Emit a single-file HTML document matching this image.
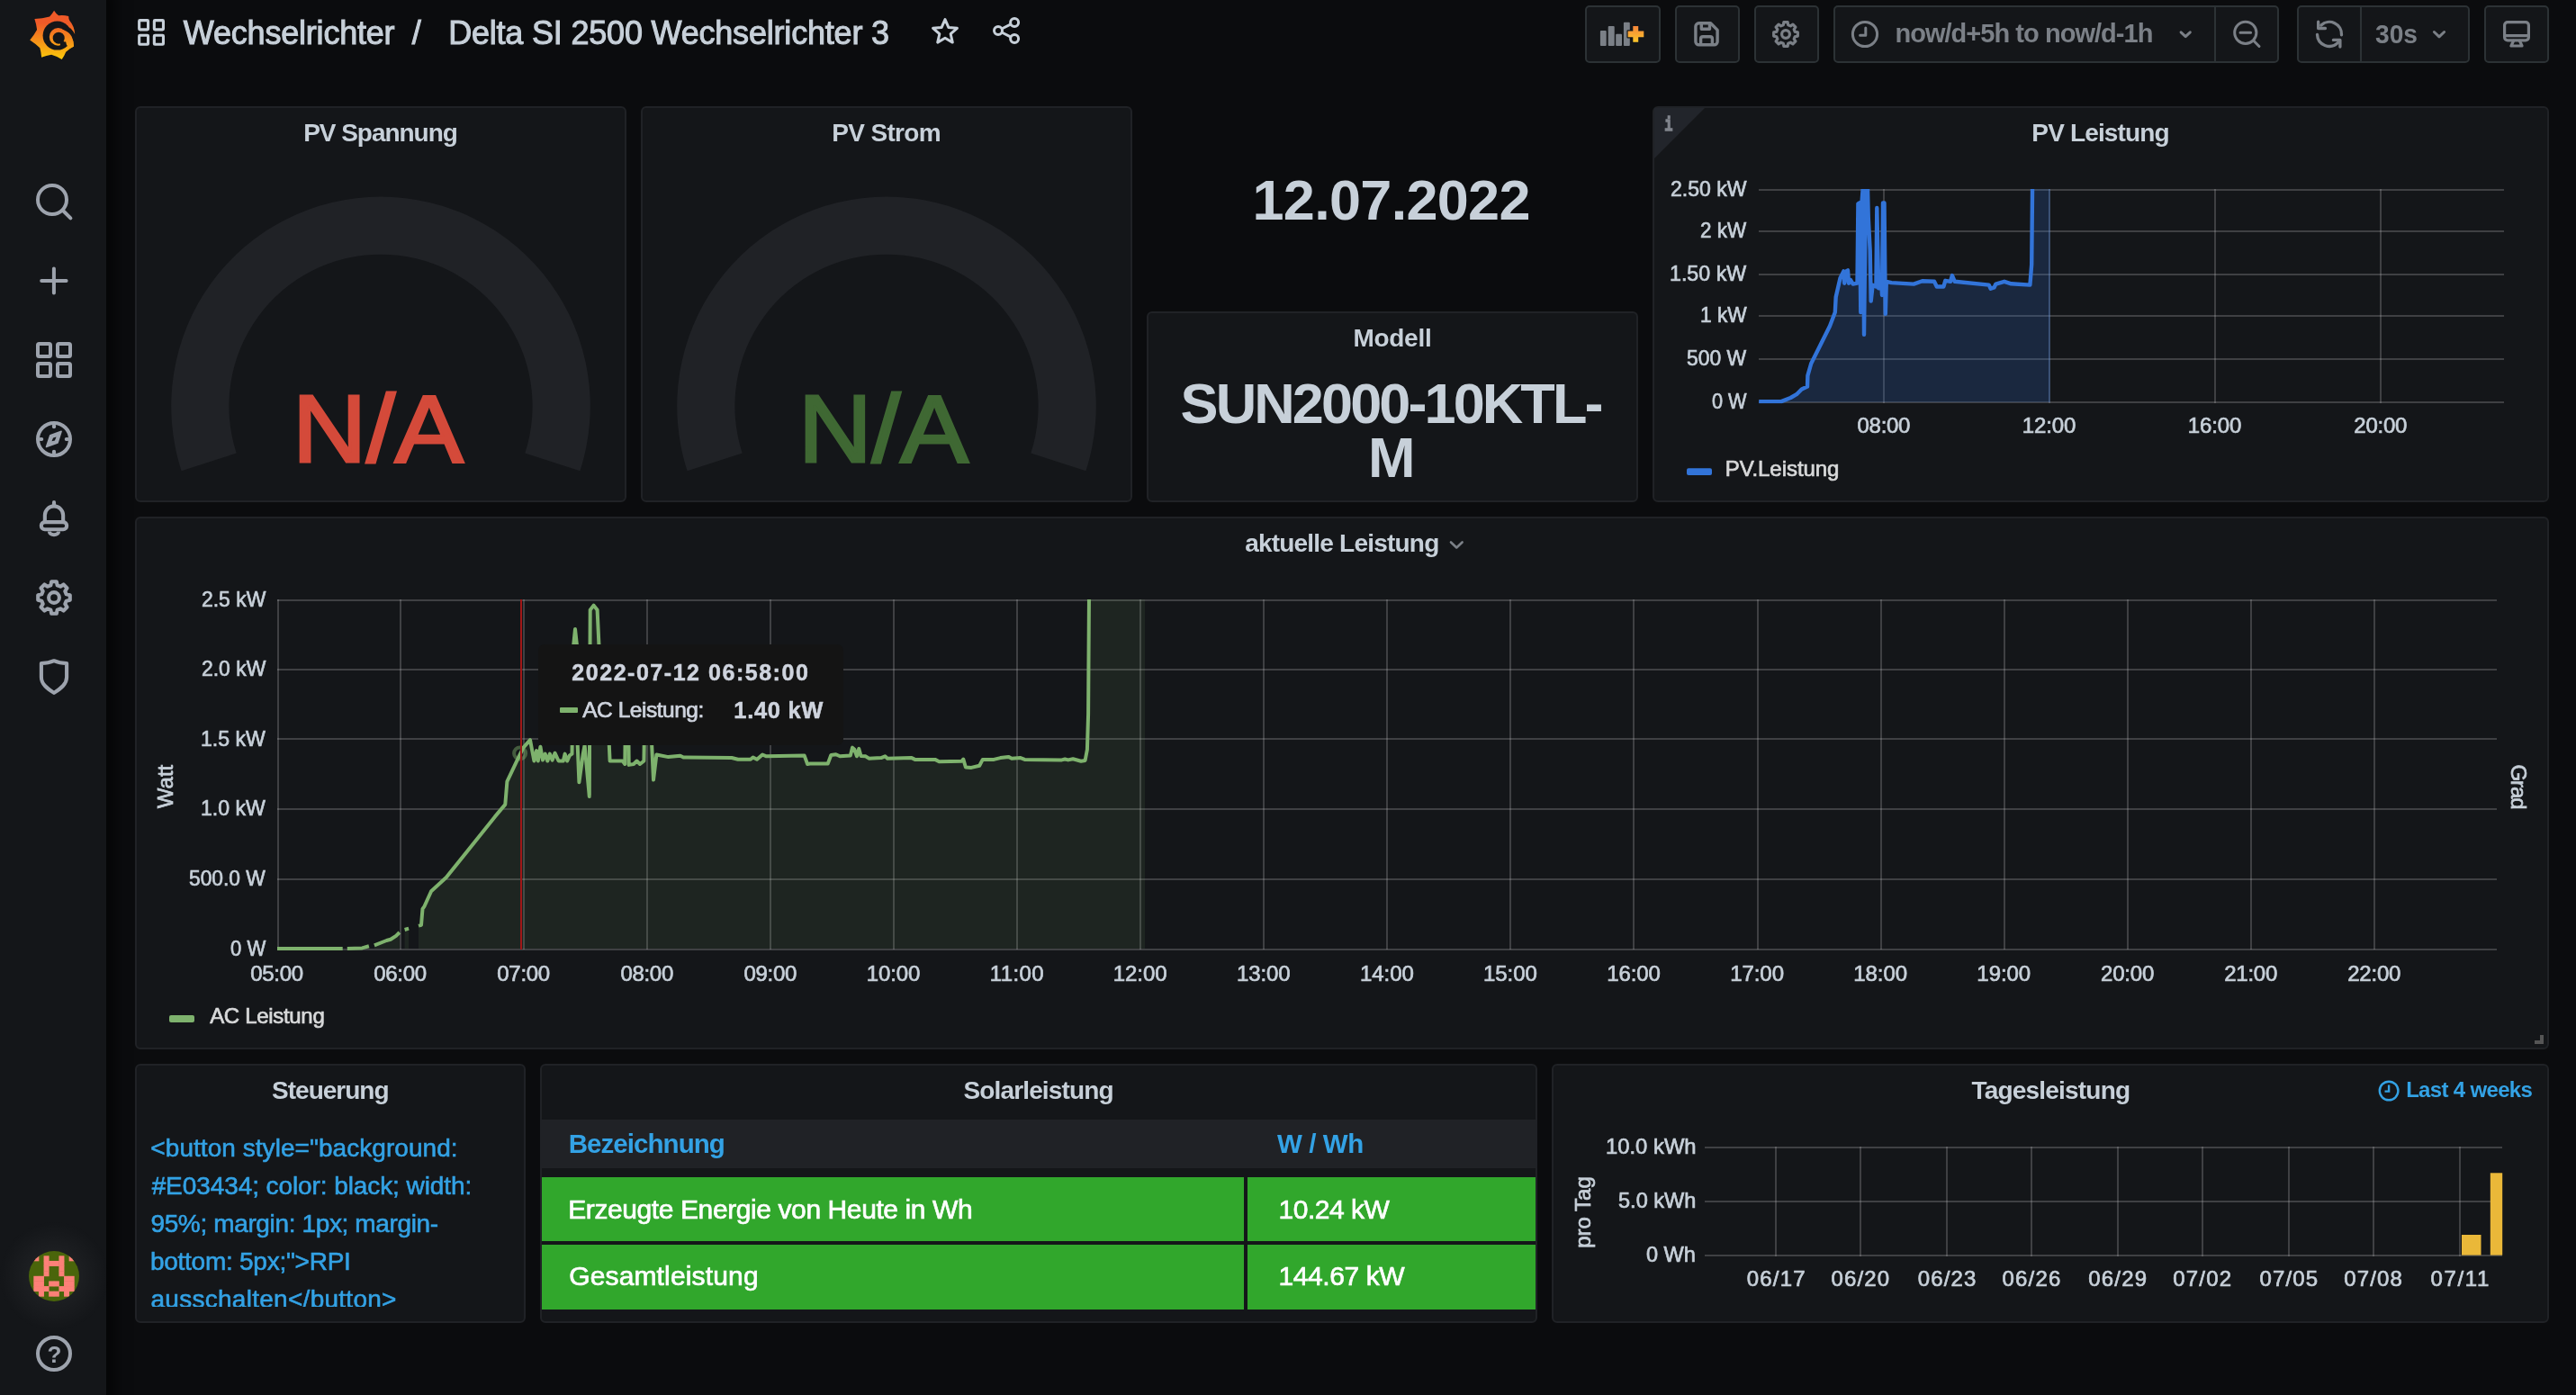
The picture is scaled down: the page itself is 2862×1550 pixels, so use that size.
<!DOCTYPE html>
<html lang="de"><head><meta charset="utf-8"><title>Delta SI 2500 Wechselrichter 3 - Grafana</title>
<style>
html,body{margin:0;padding:0;background:#0b0c0e}
body{width:2862px;height:1550px;position:relative;overflow:hidden;font-family:"Liberation Sans",sans-serif;color:#c7d0d9}
.t{position:absolute;white-space:nowrap;line-height:1}
.panel{position:absolute;box-sizing:border-box;background:#141619;border:2px solid #202226;border-radius:6px}
.btn{position:absolute;top:6px;height:64px;box-sizing:border-box;background:#141619;border:2px solid #2c3235;border-radius:5px}
#side{position:absolute;left:0;top:0;width:118px;height:1550px;background:#141619;box-shadow:0 0 14px 10px rgba(0,0,0,0.55)}
svg.full{position:absolute;left:0;top:0}
#txt{position:absolute;left:0;top:0;width:2862px;height:1550px;will-change:transform}
</style></head><body>
<div class="panel" style="left:150px;top:118px;width:546px;height:440px"></div><div class="panel" style="left:712px;top:118px;width:546px;height:440px"></div><div class="panel" style="left:1274px;top:346px;width:546px;height:212px"></div><div class="panel" style="left:1836px;top:118px;width:996px;height:440px"></div><div class="panel" style="left:150px;top:574px;width:2682px;height:592px"></div><div class="panel" style="left:150px;top:1182px;width:434px;height:288px"></div><div class="panel" style="left:600px;top:1182px;width:1108px;height:288px"></div><div class="panel" style="left:1724px;top:1182px;width:1108px;height:288px"></div>
<div class="btn" style="left:1761px;width:84px"></div><div class="btn" style="left:1861px;width:72px"></div><div class="btn" style="left:1949px;width:72px"></div><div class="btn" style="left:2037px;width:495px"></div><div class="btn" style="left:2552px;width:192px"></div><div class="btn" style="left:2760px;width:72px"></div><div style="position:absolute;left:2460px;top:8px;width:2px;height:60px;background:#2c3235"></div><div style="position:absolute;left:2622px;top:8px;width:2px;height:60px;background:#2c3235"></div>
<div id="side"></div>
<svg class="full" width="2862" height="1550" viewBox="0 0 2862 1550">
<path d="M201.6 523.3 A232.8 232.8 0 1 1 644.4 523.3 L583.3 503.5 A168.6 168.6 0 1 0 262.7 503.5 Z" fill="#202226"/>
<path d="M763.6 523.3 A232.8 232.8 0 1 1 1206.4 523.3 L1145.3 503.5 A168.6 168.6 0 1 0 824.7 503.5 Z" fill="#202226"/>
<rect x="1954" y="210" width="828" height="2" fill="rgba(200,200,200,0.24)"/>
<rect x="1954" y="256" width="828" height="2" fill="rgba(200,200,200,0.24)"/>
<rect x="1954" y="304" width="828" height="2" fill="rgba(200,200,200,0.24)"/>
<rect x="1954" y="350" width="828" height="2" fill="rgba(200,200,200,0.24)"/>
<rect x="1954" y="398" width="828" height="2" fill="rgba(200,200,200,0.24)"/>
<rect x="1954" y="446" width="828" height="2" fill="rgba(200,200,200,0.24)"/>
<rect x="2092" y="210" width="2" height="238" fill="rgba(200,200,200,0.24)"/>
<rect x="2276" y="210" width="2" height="238" fill="rgba(200,200,200,0.24)"/>
<rect x="2460" y="210" width="2" height="238" fill="rgba(200,200,200,0.24)"/>
<rect x="2644" y="210" width="2" height="238" fill="rgba(200,200,200,0.24)"/>
<clipPath id="cpv"><rect x="1954" y="210" width="828" height="238.5"/></clipPath>
<g clip-path="url(#cpv)"><polygon points="1954.2,446.1 1979.0,446.1 1989.4,442.0 1996.0,438.2 2001.7,432.5 2008.0,429.6 2008.4,417.3 2012.2,404.0 2019.8,388.8 2033.0,362.2 2038.8,347.0 2039.7,329.9 2044.5,309.0 2048.3,301.4 2049.2,314.7 2051.1,301.4 2053.0,300.4 2054.0,314.7 2055.9,310.9 2058.7,315.6 2063.5,314.7 2064.4,226.3 2066.0,225.4 2067.3,347.0 2068.2,229.2 2070.0,205.0 2071.0,371.7 2073.0,205.0 2074.9,205.0 2075.8,242.5 2077.7,278.6 2078.7,334.6 2080.6,316.6 2084.4,318.5 2085.3,231.0 2087.2,320.4 2090.0,309.0 2091.0,328.0 2092.0,225.4 2093.5,225.4 2094.8,348.9 2095.8,312.8 2101.5,314.1 2126.2,315.6 2135.7,312.2 2149.0,312.8 2151.8,318.5 2159.4,318.5 2161.3,311.8 2167.0,312.8 2168.9,306.1 2171.8,312.8 2209.8,316.6 2211.7,320.8 2215.5,319.4 2217.4,315.6 2226.9,312.8 2234.5,315.3 2255.4,316.6 2257.2,293.8 2258.1,205.0 2258.1,205 2277,205 2277,447 1954.2,447" fill="#3274d9" fill-opacity="0.2"/><rect x="2276" y="210" width="2" height="237" fill="#3274d9" fill-opacity="0.25"/><polyline points="1954.2,446.1 1979.0,446.1 1989.4,442.0 1996.0,438.2 2001.7,432.5 2008.0,429.6 2008.4,417.3 2012.2,404.0 2019.8,388.8 2033.0,362.2 2038.8,347.0 2039.7,329.9 2044.5,309.0 2048.3,301.4 2049.2,314.7 2051.1,301.4 2053.0,300.4 2054.0,314.7 2055.9,310.9 2058.7,315.6 2063.5,314.7 2064.4,226.3 2066.0,225.4 2067.3,347.0 2068.2,229.2 2070.0,205.0 2071.0,371.7 2073.0,205.0 2074.9,205.0 2075.8,242.5 2077.7,278.6 2078.7,334.6 2080.6,316.6 2084.4,318.5 2085.3,231.0 2087.2,320.4 2090.0,309.0 2091.0,328.0 2092.0,225.4 2093.5,225.4 2094.8,348.9 2095.8,312.8 2101.5,314.1 2126.2,315.6 2135.7,312.2 2149.0,312.8 2151.8,318.5 2159.4,318.5 2161.3,311.8 2167.0,312.8 2168.9,306.1 2171.8,312.8 2209.8,316.6 2211.7,320.8 2215.5,319.4 2217.4,315.6 2226.9,312.8 2234.5,315.3 2255.4,316.6 2257.2,293.8 2258.1,205.0" fill="none" stroke="#3274d9" stroke-width="4.4" stroke-linejoin="round"/></g>
<rect x="1874" y="520.2" width="28" height="7.7" rx="2" fill="#3274d9"/>
<path d="M1838 120 L1894 120 L1838 176 Z" fill="#22252b"/>
<rect x="308" y="666" width="2466" height="2" fill="rgba(200,200,200,0.24)"/>
<rect x="308" y="743" width="2466" height="2" fill="rgba(200,200,200,0.24)"/>
<rect x="308" y="820" width="2466" height="2" fill="rgba(200,200,200,0.24)"/>
<rect x="308" y="898" width="2466" height="2" fill="rgba(200,200,200,0.24)"/>
<rect x="308" y="976" width="2466" height="2" fill="rgba(200,200,200,0.24)"/>
<rect x="308" y="1054" width="2466" height="2" fill="rgba(200,200,200,0.24)"/>
<rect x="308" y="666" width="2" height="389" fill="rgba(200,200,200,0.24)"/>
<rect x="444" y="666" width="2" height="389" fill="rgba(200,200,200,0.24)"/>
<rect x="581" y="666" width="2" height="389" fill="rgba(200,200,200,0.24)"/>
<rect x="718" y="666" width="2" height="389" fill="rgba(200,200,200,0.24)"/>
<rect x="855" y="666" width="2" height="389" fill="rgba(200,200,200,0.24)"/>
<rect x="992" y="666" width="2" height="389" fill="rgba(200,200,200,0.24)"/>
<rect x="1129" y="666" width="2" height="389" fill="rgba(200,200,200,0.24)"/>
<rect x="1266" y="666" width="2" height="389" fill="rgba(200,200,200,0.24)"/>
<rect x="1403" y="666" width="2" height="389" fill="rgba(200,200,200,0.24)"/>
<rect x="1540" y="666" width="2" height="389" fill="rgba(200,200,200,0.24)"/>
<rect x="1677" y="666" width="2" height="389" fill="rgba(200,200,200,0.24)"/>
<rect x="1814" y="666" width="2" height="389" fill="rgba(200,200,200,0.24)"/>
<rect x="1952" y="666" width="2" height="389" fill="rgba(200,200,200,0.24)"/>
<rect x="2089" y="666" width="2" height="389" fill="rgba(200,200,200,0.24)"/>
<rect x="2226" y="666" width="2" height="389" fill="rgba(200,200,200,0.24)"/>
<rect x="2363" y="666" width="2" height="389" fill="rgba(200,200,200,0.24)"/>
<rect x="2500" y="666" width="2" height="389" fill="rgba(200,200,200,0.24)"/>
<rect x="2637" y="666" width="2" height="389" fill="rgba(200,200,200,0.24)"/>
<clipPath id="cm"><rect x="308" y="666" width="2468" height="390.2"/></clipPath>
<g clip-path="url(#cm)">
<polygon points="465.0,1028.7 468.0,1027.8 469.5,1009.8 471.6,1006.8 479.1,990.2 495.7,975.1 549.9,907.4 561.3,893.9 563.4,868.3 577.0,839.7 581.5,830.6 589.0,822.2 593.4,845.5 596.0,834.1 597.8,845.5 600.4,829.7 603.0,844.6 605.7,837.6 608.3,845.5 610.9,837.6 613.6,844.6 616.5,836.7 620.6,845.5 625.8,845.5 627.6,837.6 630.2,845.5 632.9,839.4 635.5,837.6 637.3,715.6 639.0,698.9 640.8,715.6 641.7,828.0 643.4,869.2 647.8,837.6 649.6,828.0 654.8,885.0 655.7,677.8 659.6,672.6 663.6,677.8 665.4,715.6 676.8,828.0 677.6,845.5 691.7,845.5 694.3,849.0 695.2,760.0 697.8,760.0 698.7,849.9 704.0,849.0 707.5,845.5 711.0,849.0 715.4,845.5 716.3,790.0 722.4,790.0 726.0,866.6 729.4,838.5 742.6,841.1 755.8,839.7 759.3,841.5 812.9,842.0 819.9,843.8 833.9,843.8 836.6,841.5 841.0,843.8 847.1,838.5 851.5,840.3 893.6,839.4 897.1,849.0 900.0,848.6 919.7,848.6 923.3,839.0 928.7,838.2 933.2,840.3 944.8,839.6 947.0,830.6 949.3,832.8 952.0,840.3 954.3,831.9 956.5,840.0 961.8,840.3 965.4,842.7 978.9,842.1 983.3,840.3 986.0,842.7 1012.9,842.1 1016.5,843.9 1038.9,843.9 1043.4,846.2 1068.5,845.7 1070.3,843.5 1072.9,852.5 1079.2,852.9 1088.2,850.7 1091.8,843.9 1104.3,843.9 1111.5,842.1 1120.4,840.9 1124.0,842.7 1133.9,842.1 1138.4,843.9 1179.6,844.4 1183.2,843.5 1186.7,844.4 1192.1,843.2 1201.1,845.7 1205.6,845.0 1207.9,832.8 1209.1,793.4 1210.0,660.0 1210,660 1272,660 1272,1054 465,1054" fill="#7eb26d" fill-opacity="0.1"/>
<polygon points="308.0,1054.0 380.7,1054.0 380.7,1054 308.0,1054" fill="#7eb26d" fill-opacity="0.1"/>
<polygon points="385.8,1054.0 402.4,1053.4 409.9,1051.3 409.9,1054 385.8,1054" fill="#7eb26d" fill-opacity="0.1"/>
<polygon points="415.9,1050.4 429.5,1045.0 434.0,1043.8 440.0,1039.9 443.9,1036.0 443.9,1054 415.9,1054" fill="#7eb26d" fill-opacity="0.1"/>
<polygon points="449.6,1033.0 454.1,1031.7 454.1,1054 449.6,1054" fill="#7eb26d" fill-opacity="0.1"/>
<polyline points="308.0,1054.0 380.7,1054.0" fill="none" stroke="#7eb26d" stroke-width="4" stroke-linejoin="round" stroke-linecap="butt"/>
<polyline points="385.8,1054.0 402.4,1053.4 409.9,1051.3" fill="none" stroke="#7eb26d" stroke-width="4" stroke-linejoin="round" stroke-linecap="butt"/>
<polyline points="415.9,1050.4 429.5,1045.0 434.0,1043.8 440.0,1039.9 443.9,1036.0" fill="none" stroke="#7eb26d" stroke-width="4" stroke-linejoin="round" stroke-linecap="butt"/>
<polyline points="449.6,1033.0 454.1,1031.7" fill="none" stroke="#7eb26d" stroke-width="4" stroke-linejoin="round" stroke-linecap="butt"/>
<polyline points="465.0,1028.7 468.0,1027.8 469.5,1009.8 471.6,1006.8 479.1,990.2 495.7,975.1 549.9,907.4 561.3,893.9 563.4,868.3 577.0,839.7 581.5,830.6 589.0,822.2 593.4,845.5 596.0,834.1 597.8,845.5 600.4,829.7 603.0,844.6 605.7,837.6 608.3,845.5 610.9,837.6 613.6,844.6 616.5,836.7 620.6,845.5 625.8,845.5 627.6,837.6 630.2,845.5 632.9,839.4 635.5,837.6 637.3,715.6 639.0,698.9 640.8,715.6 641.7,828.0 643.4,869.2 647.8,837.6 649.6,828.0 654.8,885.0 655.7,677.8 659.6,672.6 663.6,677.8 665.4,715.6 676.8,828.0 677.6,845.5 691.7,845.5 694.3,849.0 695.2,760.0 697.8,760.0 698.7,849.9 704.0,849.0 707.5,845.5 711.0,849.0 715.4,845.5 716.3,790.0 722.4,790.0 726.0,866.6 729.4,838.5 742.6,841.1 755.8,839.7 759.3,841.5 812.9,842.0 819.9,843.8 833.9,843.8 836.6,841.5 841.0,843.8 847.1,838.5 851.5,840.3 893.6,839.4 897.1,849.0 900.0,848.6 919.7,848.6 923.3,839.0 928.7,838.2 933.2,840.3 944.8,839.6 947.0,830.6 949.3,832.8 952.0,840.3 954.3,831.9 956.5,840.0 961.8,840.3 965.4,842.7 978.9,842.1 983.3,840.3 986.0,842.7 1012.9,842.1 1016.5,843.9 1038.9,843.9 1043.4,846.2 1068.5,845.7 1070.3,843.5 1072.9,852.5 1079.2,852.9 1088.2,850.7 1091.8,843.9 1104.3,843.9 1111.5,842.1 1120.4,840.9 1124.0,842.7 1133.9,842.1 1138.4,843.9 1179.6,844.4 1183.2,843.5 1186.7,844.4 1192.1,843.2 1201.1,845.7 1205.6,845.0 1207.9,832.8 1209.1,793.4 1210.0,660.0" fill="none" stroke="#7eb26d" stroke-width="4" stroke-linejoin="round" stroke-linecap="butt"/>
</g>
<circle cx="577.6" cy="837" r="6.5" fill="none" stroke="#7eb26d" stroke-opacity="0.45" stroke-width="4"/>
<rect x="578" y="666" width="2" height="389" fill="#a01717"/>
<rect x="188" y="1128" width="28" height="8" rx="2" fill="#7eb26d"/>
<path d="M1612 602.5 L1618.3 608.5 L1624.6 602.5" fill="none" stroke="#7b8087" stroke-width="2.6" stroke-linecap="round" stroke-linejoin="round"/>
<path d="M2816 1156 H2822 V1150 H2826 V1160 H2816 Z" fill="#555"/>
<rect x="1894" y="1274" width="886" height="2" fill="rgba(200,200,200,0.24)"/>
<rect x="1894" y="1334" width="886" height="2" fill="rgba(200,200,200,0.24)"/>
<rect x="1894" y="1394" width="886" height="2" fill="rgba(200,200,200,0.24)"/>
<rect x="1972" y="1274" width="2" height="122" fill="rgba(200,200,200,0.24)"/>
<rect x="2066" y="1274" width="2" height="122" fill="rgba(200,200,200,0.24)"/>
<rect x="2162" y="1274" width="2" height="122" fill="rgba(200,200,200,0.24)"/>
<rect x="2256" y="1274" width="2" height="122" fill="rgba(200,200,200,0.24)"/>
<rect x="2352" y="1274" width="2" height="122" fill="rgba(200,200,200,0.24)"/>
<rect x="2446" y="1274" width="2" height="122" fill="rgba(200,200,200,0.24)"/>
<rect x="2542" y="1274" width="2" height="122" fill="rgba(200,200,200,0.24)"/>
<rect x="2636" y="1274" width="2" height="122" fill="rgba(200,200,200,0.24)"/>
<rect x="2732" y="1274" width="2" height="122" fill="rgba(200,200,200,0.24)"/>
<rect x="2735" y="1372" width="21.5" height="22.6" fill="#eab839"/>
<rect x="2766.8" y="1303.3" width="13.4" height="91.3" fill="#eab839"/>
<circle cx="2654.1" cy="1212" r="10.3" fill="none" stroke="#33a2e5" stroke-width="2.4"/><path d="M2654.1 1205.5 V1212.6 H2649.5" fill="none" stroke="#33a2e5" stroke-width="2.4"/>
</svg>
<div id="txt">
<div class="t" style="left:203.83px;top:18.93px;font-size:36px;letter-spacing:-0.202px;-webkit-text-stroke:1.04px;">Wechselrichter</div>
<div class="t" style="left:457.82px;top:18.93px;font-size:36px;-webkit-text-stroke:1.04px;">/</div>
<div class="t" style="left:498.14px;top:18.93px;font-size:36px;letter-spacing:-0.196px;-webkit-text-stroke:1.04px;">Delta SI 2500 Wechselrichter 3</div>
<div class="t" style="left:337.18px;top:134.10px;font-size:28px;letter-spacing:-1.036px;font-weight:bold;">PV Spannung</div>
<div class="t" style="left:924.33px;top:134.10px;font-size:28px;letter-spacing:-0.686px;font-weight:bold;">PV Strom</div>
<div class="t" style="left:1503.38px;top:362.10px;font-size:28px;letter-spacing:-0.262px;font-weight:bold;">Modell</div>
<div class="t" style="left:2257.33px;top:134.10px;font-size:28px;letter-spacing:-0.843px;font-weight:bold;">PV Leistung</div>
<div class="t" style="left:1383.13px;top:590.20px;font-size:28px;letter-spacing:-0.787px;font-weight:bold;">aktuelle Leistung</div>
<div class="t" style="left:302.08px;top:1198.10px;font-size:28px;letter-spacing:-0.996px;font-weight:bold;">Steuerung</div>
<div class="t" style="left:1070.43px;top:1198.10px;font-size:28px;letter-spacing:-0.849px;font-weight:bold;">Solarleistung</div>
<div class="t" style="left:2190.47px;top:1198.10px;font-size:28px;letter-spacing:-0.800px;font-weight:bold;">Tagesleistung</div>
<div class="t" style="left:324.97px;top:423.72px;font-size:105px;transform-origin:0 50%;transform:scaleX(1.0843);color:#d44a3a;-webkit-text-stroke:3px;">N/A</div>
<div class="t" style="left:887.21px;top:423.72px;font-size:105px;transform-origin:0 50%;transform:scaleX(1.0784);color:#3f6833;-webkit-text-stroke:3px;">N/A</div>
<div class="t" style="left:1391.56px;top:190.97px;font-size:63px;letter-spacing:-0.713px;font-weight:bold;">12.07.2022</div>
<div class="t" style="left:1311.57px;top:417.37px;font-size:63px;letter-spacing:-2.902px;font-weight:bold;">SUN2000-10KTL-</div>
<div class="t" style="left:1519.98px;top:477.07px;font-size:63px;font-weight:bold;">M</div>
<div class="t" style="left:2063.55px;top:461.18px;font-size:24px;letter-spacing:-0.290px;-webkit-text-stroke:0.7px;">08:00</div>
<div class="t" style="left:2246.65px;top:461.18px;font-size:24px;letter-spacing:-0.065px;-webkit-text-stroke:0.7px;">12:00</div>
<div class="t" style="left:2430.65px;top:461.18px;font-size:24px;letter-spacing:-0.065px;-webkit-text-stroke:0.7px;">16:00</div>
<div class="t" style="left:2615.25px;top:461.18px;font-size:24px;letter-spacing:-0.215px;-webkit-text-stroke:0.7px;">20:00</div>
<div class="t" style="left:1855.58px;top:198.28px;font-size:24px;transform-origin:0 50%;transform:scaleX(0.9609);-webkit-text-stroke:0.7px;">2.50 kW</div>
<div class="t" style="left:1889.11px;top:244.28px;font-size:24px;transform-origin:0 50%;transform:scaleX(0.9343);-webkit-text-stroke:0.7px;">2 kW</div>
<div class="t" style="left:1855.00px;top:292.28px;font-size:24px;transform-origin:0 50%;transform:scaleX(0.9676);-webkit-text-stroke:0.7px;">1.50 kW</div>
<div class="t" style="left:1888.53px;top:338.28px;font-size:24px;transform-origin:0 50%;transform:scaleX(0.9447);-webkit-text-stroke:0.7px;">1 kW</div>
<div class="t" style="left:1874.02px;top:386.28px;font-size:24px;transform-origin:0 50%;transform:scaleX(0.9537);-webkit-text-stroke:0.7px;">500 W</div>
<div class="t" style="left:1901.60px;top:434.28px;font-size:24px;transform-origin:0 50%;transform:scaleX(0.9044);-webkit-text-stroke:0.7px;">0 W</div>
<div class="t" style="left:1916.73px;top:509.28px;font-size:24px;letter-spacing:-0.048px;color:#d8d9da;-webkit-text-stroke:0.7px;">PV.Leistung</div>
<div class="t" style="left:1846px;top:128.6px;width:16px;text-align:center;font-size:22px;font-weight:bold;font-family:'Liberation Mono',monospace;color:#82868e;-webkit-text-stroke:1.3px;transform:scaleX(0.7)">i</div>
<div class="t" style="left:278.15px;top:1070.08px;font-size:24px;letter-spacing:-0.290px;-webkit-text-stroke:0.7px;">05:00</div>
<div class="t" style="left:415.23px;top:1070.08px;font-size:24px;letter-spacing:-0.290px;-webkit-text-stroke:0.7px;">06:00</div>
<div class="t" style="left:552.31px;top:1070.08px;font-size:24px;letter-spacing:-0.290px;-webkit-text-stroke:0.7px;">07:00</div>
<div class="t" style="left:689.39px;top:1070.08px;font-size:24px;letter-spacing:-0.290px;-webkit-text-stroke:0.7px;">08:00</div>
<div class="t" style="left:826.47px;top:1070.08px;font-size:24px;letter-spacing:-0.290px;-webkit-text-stroke:0.7px;">09:00</div>
<div class="t" style="left:962.65px;top:1070.08px;font-size:24px;letter-spacing:-0.065px;-webkit-text-stroke:0.7px;">10:00</div>
<div class="t" style="left:1099.73px;top:1070.08px;font-size:24px;letter-spacing:0.385px;-webkit-text-stroke:0.7px;">11:00</div>
<div class="t" style="left:1236.81px;top:1070.08px;font-size:24px;letter-spacing:-0.065px;-webkit-text-stroke:0.7px;">12:00</div>
<div class="t" style="left:1373.89px;top:1070.08px;font-size:24px;letter-spacing:-0.065px;-webkit-text-stroke:0.7px;">13:00</div>
<div class="t" style="left:1510.97px;top:1070.08px;font-size:24px;letter-spacing:-0.065px;-webkit-text-stroke:0.7px;">14:00</div>
<div class="t" style="left:1648.05px;top:1070.08px;font-size:24px;letter-spacing:-0.065px;-webkit-text-stroke:0.7px;">15:00</div>
<div class="t" style="left:1785.13px;top:1070.08px;font-size:24px;letter-spacing:-0.065px;-webkit-text-stroke:0.7px;">16:00</div>
<div class="t" style="left:1922.21px;top:1070.08px;font-size:24px;letter-spacing:-0.065px;-webkit-text-stroke:0.7px;">17:00</div>
<div class="t" style="left:2059.29px;top:1070.08px;font-size:24px;letter-spacing:-0.065px;-webkit-text-stroke:0.7px;">18:00</div>
<div class="t" style="left:2196.37px;top:1070.08px;font-size:24px;letter-spacing:-0.065px;-webkit-text-stroke:0.7px;">19:00</div>
<div class="t" style="left:2334.05px;top:1070.08px;font-size:24px;letter-spacing:-0.215px;-webkit-text-stroke:0.7px;">20:00</div>
<div class="t" style="left:2471.13px;top:1070.08px;font-size:24px;letter-spacing:-0.215px;-webkit-text-stroke:0.7px;">21:00</div>
<div class="t" style="left:2608.21px;top:1070.08px;font-size:24px;letter-spacing:-0.215px;-webkit-text-stroke:0.7px;">22:00</div>
<div class="t" style="left:223.79px;top:654.08px;font-size:24px;transform-origin:0 50%;transform:scaleX(0.9550);-webkit-text-stroke:0.7px;">2.5 kW</div>
<div class="t" style="left:223.79px;top:731.08px;font-size:24px;transform-origin:0 50%;transform:scaleX(0.9550);-webkit-text-stroke:0.7px;">2.0 kW</div>
<div class="t" style="left:223.20px;top:808.58px;font-size:24px;transform-origin:0 50%;transform:scaleX(0.9627);-webkit-text-stroke:0.7px;">1.5 kW</div>
<div class="t" style="left:223.20px;top:886.08px;font-size:24px;transform-origin:0 50%;transform:scaleX(0.9627);-webkit-text-stroke:0.7px;">1.0 kW</div>
<div class="t" style="left:210.22px;top:963.58px;font-size:24px;transform-origin:0 50%;transform:scaleX(0.9497);-webkit-text-stroke:0.7px;">500.0 W</div>
<div class="t" style="left:255.89px;top:1041.58px;font-size:24px;transform-origin:0 50%;transform:scaleX(0.9185);-webkit-text-stroke:0.7px;">0 W</div>
<div class="t" style="left:-24.18px;top:-20.32px;font-size:24px;-webkit-text-stroke:0.7px;left:183.6px;top:874px;transform:translate(-50%,-50%) rotate(-90deg);">Watt</div>
<div class="t" style="left:-26.52px;top:-20.32px;font-size:24px;-webkit-text-stroke:0.7px;left:2798px;top:874px;letter-spacing:-1.1px;transform:translate(-50%,-50%) rotate(90deg);">Grad</div>
<div class="t" style="left:233.15px;top:1117.48px;font-size:24px;letter-spacing:-0.314px;color:#d8d9da;-webkit-text-stroke:0.7px;">AC Leistung</div>
<div style="position:absolute;left:150px;top:1182px;width:434px;height:270px;overflow:hidden"><div class="t" style="left:17.37px;top:79.60px;font-size:28px;letter-spacing:0.049px;color:#33a2e5;-webkit-text-stroke:0.6px">&lt;button style="background:</div><div class="t" style="left:18.63px;top:121.80px;font-size:28px;letter-spacing:-0.085px;color:#33a2e5;-webkit-text-stroke:0.6px">#E03434; color: black; width:</div><div class="t" style="left:17.44px;top:164.00px;font-size:28px;letter-spacing:-0.363px;color:#33a2e5;-webkit-text-stroke:0.6px">95%; margin: 1px; margin-</div><div class="t" style="left:16.95px;top:206.20px;font-size:28px;letter-spacing:-0.257px;color:#33a2e5;-webkit-text-stroke:0.6px">bottom: 5px;"&gt;RPI</div><div class="t" style="left:17.51px;top:248.40px;font-size:28px;letter-spacing:0.274px;color:#33a2e5;-webkit-text-stroke:0.6px">ausschalten&lt;/button&gt;</div></div>
<div style="position:absolute;left:602px;top:1244px;width:1104px;height:54px;background:#202226"></div>
<div style="position:absolute;left:602px;top:1308px;width:780px;height:71px;background:#31a72c"></div>
<div style="position:absolute;left:1386px;top:1308px;width:320px;height:71px;background:#31a72c"></div>
<div style="position:absolute;left:602px;top:1383px;width:780px;height:72px;background:#31a72c"></div>
<div style="position:absolute;left:1386px;top:1383px;width:320px;height:72px;background:#31a72c"></div>
<div class="t" style="left:631.68px;top:1255.73px;font-size:29.5px;letter-spacing:-0.943px;font-weight:bold;color:#33a2e5;">Bezeichnung</div>
<div class="t" style="left:1419.00px;top:1255.73px;font-size:29.5px;letter-spacing:-0.408px;font-weight:bold;color:#33a2e5;">W / Wh</div>
<div class="t" style="left:631.25px;top:1328.51px;font-size:30px;letter-spacing:-0.405px;color:#fff;-webkit-text-stroke:0.7px;">Erzeugte Energie von Heute in Wh</div>
<div class="t" style="left:632.15px;top:1403.11px;font-size:30px;letter-spacing:0.158px;color:#fff;-webkit-text-stroke:0.7px;">Gesamtleistung</div>
<div class="t" style="left:1420.50px;top:1328.51px;font-size:30px;letter-spacing:-0.475px;color:#fff;-webkit-text-stroke:0.7px;">10.24 kW</div>
<div class="t" style="left:1420.50px;top:1403.11px;font-size:30px;letter-spacing:-0.419px;color:#fff;-webkit-text-stroke:0.7px;">144.67 kW</div>
<div class="t" style="left:1783.66px;top:1261.68px;font-size:24px;transform-origin:0 50%;transform:scaleX(0.9925);-webkit-text-stroke:0.7px;">10.0 kWh</div>
<div class="t" style="left:1797.90px;top:1321.68px;font-size:24px;transform-origin:0 50%;transform:scaleX(0.9808);-webkit-text-stroke:0.7px;">5.0 kWh</div>
<div class="t" style="left:1829.36px;top:1381.68px;font-size:24px;transform-origin:0 50%;transform:scaleX(0.9801);-webkit-text-stroke:0.7px;">0 Wh</div>
<div class="t" style="left:1940.70px;top:1409.08px;font-size:24px;letter-spacing:1.195px;-webkit-text-stroke:0.7px;">06/17</div>
<div class="t" style="left:2034.60px;top:1409.08px;font-size:24px;letter-spacing:1.135px;-webkit-text-stroke:0.7px;">06/20</div>
<div class="t" style="left:2130.70px;top:1409.08px;font-size:24px;letter-spacing:1.165px;-webkit-text-stroke:0.7px;">06/23</div>
<div class="t" style="left:2224.60px;top:1409.08px;font-size:24px;letter-spacing:1.165px;-webkit-text-stroke:0.7px;">06/26</div>
<div class="t" style="left:2320.30px;top:1409.08px;font-size:24px;letter-spacing:1.180px;-webkit-text-stroke:0.7px;">06/29</div>
<div class="t" style="left:2414.20px;top:1409.08px;font-size:24px;letter-spacing:1.195px;-webkit-text-stroke:0.7px;">07/02</div>
<div class="t" style="left:2510.40px;top:1409.08px;font-size:24px;letter-spacing:1.150px;-webkit-text-stroke:0.7px;">07/05</div>
<div class="t" style="left:2604.30px;top:1409.08px;font-size:24px;letter-spacing:1.150px;-webkit-text-stroke:0.7px;">07/08</div>
<div class="t" style="left:2700.50px;top:1409.08px;font-size:24px;letter-spacing:1.645px;-webkit-text-stroke:0.7px;">07/11</div>
<div class="t" style="left:-39.81px;top:-20.32px;font-size:24px;-webkit-text-stroke:0.7px;left:1759.2px;top:1347.3px;transform:translate(-50%,-50%) rotate(-90deg);">pro Tag</div>
<div class="t" style="left:2673.14px;top:1199.48px;font-size:24px;letter-spacing:-0.665px;font-weight:bold;color:#33a2e5;">Last 4 weeks</div>
<div class="t" style="left:2105.41px;top:23.45px;font-size:29px;letter-spacing:-0.962px;font-weight:bold;color:#7b8087;">now/d+5h to now/d-1h</div>
<div class="t" style="left:2639.37px;top:23.55px;font-size:29px;transform-origin:0 50%;transform:scaleX(0.9717);font-weight:bold;color:#7b8087;">30s</div>
<div class="t" style="left:52.40px;top:1491.59px;font-size:26px;font-weight:bold;color:#9da3ad;">?</div>
<div style="position:absolute;left:598px;top:716px;width:339px;height:112px;background:#141414;border-radius:7px"></div>
<div class="t" style="left:635.34px;top:734.84px;font-size:25px;letter-spacing:1.532px;font-weight:bold;color:#cfd4de;-webkit-text-stroke:0.5px;">2022-07-12 06:58:00</div>
<div class="t" style="left:647.25px;top:777.36px;font-size:24.5px;letter-spacing:-0.479px;color:#cfd4de;-webkit-text-stroke:0.71px;">AC Leistung:</div>
<div class="t" style="left:815.36px;top:776.51px;font-size:25.5px;letter-spacing:0.684px;font-weight:bold;color:#cfd4de;-webkit-text-stroke:0.5px;">1.40 kW</div>
<div style="position:absolute;left:622px;top:786px;width:19.5px;height:5.5px;background:#7eb26d;border-radius:1px"></div>
</div>
<svg class="full" width="2862" height="1550" viewBox="0 0 2862 1550">
<defs><linearGradient id="lg" gradientUnits="userSpaceOnUse" x1="0" y1="12" x2="0" y2="66"><stop offset="0" stop-color="#f05a28"/><stop offset="0.25" stop-color="#f05a28"/><stop offset="1" stop-color="#fbca0a"/></linearGradient><linearGradient id="pg" x1="0" y1="0" x2="0" y2="1"><stop offset="0" stop-color="#f5853a"/><stop offset="1" stop-color="#fcc72a"/></linearGradient></defs>
<path d="M60.1 11.8 Q62.4 15.6 65.1 17.3 Q70.6 16.6 76.2 17.9 Q76.2 20.8 77.4 23.1 Q82.6 29 83.2 38.2 Q80.5 33 78 31.5 L77 36 L79.4 41.1 Q82 46 82 51.4 Q77 54 73.2 57.7 Q71.4 62.2 68.7 66.1 Q63.4 62.6 57.1 60.8 Q51.4 61.6 46.1 63.8 Q45.8 58.2 44.3 53.2 Q39.2 48.6 33.2 44.6 Q37.8 39.2 41.1 33.1 Q40.4 27 38.4 21 Q47 20.6 55.1 18.5 Q58 15.6 60.1 11.8 Z" fill="url(#lg)"/>
<circle cx="63.6" cy="39.6" r="16" fill="#141619"/>
<path d="M77.6 30.5 L83.2 38.6 L79.4 42.4 L76 36 Z" fill="#141619"/>
<path d="M70 33 Q77.4 35.8 79.6 40.6 Q82 46 82 51.4 L78.4 53.6 Q74.2 51.6 73.2 47.4 Q73 40 69 34 Z" fill="url(#lg)"/>
<circle cx="64.6" cy="40.9" r="9.8" fill="url(#lg)"/>
<circle cx="65.2" cy="42.2" r="6.5" fill="#141619"/>
<path d="M66.4 44 L73.4 47.2 Q73.2 52.4 67.4 53.6 Z" fill="#141619"/>
<g fill="none" stroke="#9da3ad" stroke-width="4" stroke-linecap="round" stroke-linejoin="round"><circle cx="58" cy="222" r="16"/><path d="M70 234 L78.4 242.4"/><path d="M46.2 312 H73.6 M59.9 298.6 V325.6"/><rect x="42" y="382" width="14" height="14" rx="1.5"/><rect x="64" y="382" width="14" height="14" rx="1.5"/><rect x="42" y="404" width="14" height="14" rx="1.5"/><rect x="64" y="404" width="14" height="14" rx="1.5"/><circle cx="60" cy="488" r="18"/></g>
<path d="M68.1 479.3 L64 492 L51.5 496.5 L55.8 483.8 Z" fill="#9da3ad" stroke="#9da3ad" stroke-width="1.6" stroke-linejoin="round"/><path d="M62.5 485.6 L60.9 489.5 L57.5 490.3 L59.1 486.4 Z" fill="#141619"/>
<g stroke="#9da3ad" stroke-width="4.2" stroke-linecap="round"><path d="M60 473 V474.2 M60 501.8 V503 M45 488 H46.2 M73.8 488 H75"/></g>
<g fill="none" stroke="#9da3ad" stroke-width="4.1" stroke-linecap="round" stroke-linejoin="round"><path d="M60 558 V561"/><path d="M49.85 580 V572.5 a10.15 10.15 0 0 1 20.3 0 V580"/><rect x="45.85" y="580.1" width="28.3" height="8.1" rx="4"/><path d="M54.9 590.6 a5.1 3.6 0 0 0 10.2 0" stroke-linecap="butt"/></g>
<path d="M56.36 650.27 L57.18 646.22 L62.82 646.22 L63.64 650.27 L67.13 651.72 L70.58 649.44 L74.56 653.42 L72.28 656.87 L73.73 660.36 L77.78 661.18 L77.78 666.82 L73.73 667.64 L72.28 671.13 L74.56 674.58 L70.58 678.56 L67.13 676.28 L63.64 677.73 L62.82 681.78 L57.18 681.78 L56.36 677.73 L52.87 676.28 L49.42 678.56 L45.44 674.58 L47.72 671.13 L46.27 667.64 L42.22 666.82 L42.22 661.18 L46.27 660.36 L47.72 656.87 L45.44 653.42 L49.42 649.44 L52.87 651.72 Z" fill="none" stroke="#9da3ad" stroke-width="4.1" stroke-linejoin="round"/><circle cx="60" cy="664" r="5.9" fill="none" stroke="#9da3ad" stroke-width="4.1"/>
<path d="M45.9 737 Q54 737 60 734.2 Q66 737 74.1 737 V752.5 C74.1 760 68 764.5 60 769.9 C52 764.5 45.9 760 45.9 752.5 Z" fill="none" stroke="#9da3ad" stroke-width="4.1" stroke-linejoin="round"/>
<circle cx="60" cy="1504" r="18" fill="none" stroke="#9da3ad" stroke-width="4"/>
<radialGradient id="glow" gradientUnits="userSpaceOnUse" cx="60" cy="1418" r="62"><stop offset="0" stop-color="#fff" stop-opacity="0.05"/><stop offset="0.5" stop-color="#fff" stop-opacity="0.035"/><stop offset="1" stop-color="#fff" stop-opacity="0"/></radialGradient><circle cx="60" cy="1418" r="62" fill="url(#glow)"/>
<clipPath id="av"><circle cx="60" cy="1418" r="28"/></clipPath><g clip-path="url(#av)"><rect x="30" y="1388" width="60" height="60" fill="#4a650b"/>
<rect x="37.32" y="1395.32" width="6.02" height="6.02" fill="#fc8078"/>
<rect x="48.56" y="1395.32" width="6.02" height="6.02" fill="#fc8078"/>
<rect x="65.42" y="1395.32" width="6.02" height="6.02" fill="#fc8078"/>
<rect x="76.66" y="1395.32" width="6.02" height="6.02" fill="#fc8078"/>
<rect x="48.56" y="1400.94" width="6.02" height="6.02" fill="#fc8078"/>
<rect x="54.18" y="1400.94" width="6.02" height="6.02" fill="#fc8078"/>
<rect x="59.80" y="1400.94" width="6.02" height="6.02" fill="#fc8078"/>
<rect x="65.42" y="1400.94" width="6.02" height="6.02" fill="#fc8078"/>
<rect x="48.56" y="1406.56" width="6.02" height="6.02" fill="#fc8078"/>
<rect x="65.42" y="1406.56" width="6.02" height="6.02" fill="#fc8078"/>
<rect x="48.56" y="1412.18" width="6.02" height="6.02" fill="#fc8078"/>
<rect x="65.42" y="1412.18" width="6.02" height="6.02" fill="#fc8078"/>
<rect x="37.32" y="1417.80" width="6.02" height="6.02" fill="#fc8078"/>
<rect x="42.94" y="1417.80" width="6.02" height="6.02" fill="#fc8078"/>
<rect x="71.04" y="1417.80" width="6.02" height="6.02" fill="#fc8078"/>
<rect x="76.66" y="1417.80" width="6.02" height="6.02" fill="#fc8078"/>
<rect x="37.32" y="1423.42" width="6.02" height="6.02" fill="#fc8078"/>
<rect x="42.94" y="1423.42" width="6.02" height="6.02" fill="#fc8078"/>
<rect x="54.18" y="1423.42" width="6.02" height="6.02" fill="#fc8078"/>
<rect x="59.80" y="1423.42" width="6.02" height="6.02" fill="#fc8078"/>
<rect x="71.04" y="1423.42" width="6.02" height="6.02" fill="#fc8078"/>
<rect x="76.66" y="1423.42" width="6.02" height="6.02" fill="#fc8078"/>
<rect x="37.32" y="1429.04" width="6.02" height="6.02" fill="#fc8078"/>
<rect x="42.94" y="1429.04" width="6.02" height="6.02" fill="#fc8078"/>
<rect x="48.56" y="1429.04" width="6.02" height="6.02" fill="#fc8078"/>
<rect x="65.42" y="1429.04" width="6.02" height="6.02" fill="#fc8078"/>
<rect x="71.04" y="1429.04" width="6.02" height="6.02" fill="#fc8078"/>
<rect x="76.66" y="1429.04" width="6.02" height="6.02" fill="#fc8078"/>
<rect x="42.94" y="1434.66" width="6.02" height="6.02" fill="#fc8078"/>
<rect x="54.18" y="1434.66" width="6.02" height="6.02" fill="#fc8078"/>
<rect x="59.80" y="1434.66" width="6.02" height="6.02" fill="#fc8078"/>
<rect x="71.04" y="1434.66" width="6.02" height="6.02" fill="#fc8078"/>
</g>
<g fill="none" stroke="#c7d0d9" stroke-width="3.1" stroke-linejoin="round"><rect x="154.65" y="22.6" width="9.9" height="10.3" rx="0.8"/><rect x="171.35" y="22.6" width="10.1" height="10.3" rx="0.8"/><rect x="154.65" y="39.2" width="9.9" height="10.1" rx="0.8"/><rect x="171.35" y="39.2" width="10.1" height="10.1" rx="0.8"/></g>
<path d="M1050.00 21.60 L1053.82 30.44 L1063.41 31.34 L1056.18 37.71 L1058.29 47.11 L1050.00 42.20 L1041.71 47.11 L1043.82 37.71 L1036.59 31.34 L1046.18 30.44 Z" fill="none" stroke="#c7d0d9" stroke-width="3" stroke-linejoin="round"/>
<g fill="none" stroke="#c7d0d9" stroke-width="3"><circle cx="1109" cy="34" r="4.5"/><circle cx="1127.1" cy="24.9" r="4.5"/><circle cx="1127.1" cy="43.1" r="4.5"/><path d="M1113 32 L1123.1 26.9 M1113 36 L1123.1 41.1"/></g>
<g fill="#7b8087"><rect x="1777.9" y="34" width="6.8" height="17" rx="1"/><rect x="1786.7" y="29.1" width="7" height="21.9" rx="1"/><rect x="1795.2" y="37.8" width="6.8" height="13.2" rx="1"/><rect x="1803.9" y="24.8" width="6.9" height="26.2" rx="1"/></g>
<path d="M1814.3 29.1 H1820.2 V34.5 H1826.3 V41.3 H1820.2 V46.8 H1814.3 V41.3 H1808.6 V34.5 H1814.3 Z" fill="url(#pg)" stroke="#141619" stroke-width="2.4" stroke-linejoin="round" paint-order="stroke"/>
<g fill="none" stroke="#7b8087" stroke-width="3.4" stroke-linejoin="round"><path d="M1887.5 25.8 H1900.5 L1908.1 33.4 V46.2 a3.6 3.6 0 0 1 -3.6 3.6 H1887.5 a3.6 3.6 0 0 1 -3.6 -3.6 V29.4 a3.6 3.6 0 0 1 3.6 -3.6 Z"/><path d="M1890.3 26.5 V32.2 H1899.5 V26.5"/><path d="M1889.6 49.5 V43.2 a2.4 2.4 0 0 1 2.4 -2.4 H1900 a2.4 2.4 0 0 1 2.4 2.4 V49.5"/></g>
<path d="M1981.28 27.75 L1981.89 24.67 L1986.11 24.67 L1986.72 27.75 L1989.32 28.83 L1991.94 27.08 L1994.92 30.06 L1993.17 32.68 L1994.25 35.28 L1997.33 35.89 L1997.33 40.11 L1994.25 40.72 L1993.17 43.32 L1994.92 45.94 L1991.94 48.92 L1989.32 47.17 L1986.72 48.25 L1986.11 51.33 L1981.89 51.33 L1981.28 48.25 L1978.68 47.17 L1976.06 48.92 L1973.08 45.94 L1974.83 43.32 L1973.75 40.72 L1970.67 40.11 L1970.67 35.89 L1973.75 35.28 L1974.83 32.68 L1973.08 30.06 L1976.06 27.08 L1978.68 28.83 Z" fill="none" stroke="#7b8087" stroke-width="3.2" stroke-linejoin="round"/><circle cx="1984" cy="38" r="4.4" fill="none" stroke="#7b8087" stroke-width="3.2"/>
<g fill="none" stroke="#7b8087" stroke-width="3" stroke-linecap="round" stroke-linejoin="round"><circle cx="2072" cy="38" r="13.6"/><path d="M2072.8 31 V39.2 H2066.6"/><path d="M2423.1 35.8 L2428.2 40.6 L2433.3 35.8"/><circle cx="2494.8" cy="36.3" r="12.1"/><path d="M2503.8 45.3 L2510 51.5 M2489 36.3 H2500.6"/><path d="M2704.4 35.5 L2710 40.8 L2715.6 35.5"/></g>
<g fill="none" stroke="#7b8087" stroke-width="3.3" stroke-linecap="round" stroke-linejoin="round"><path d="M2578.8 28 A13.5 13.5 0 0 1 2601.5 38.75"/><path d="M2575.65 24.2 V31.5 H2583.5"/><path d="M2574.5 38.4 A13.5 13.5 0 0 0 2597.5 47.45"/><path d="M2592.4 44.4 H2599.9 V52"/></g>
<g fill="none" stroke="#7b8087" stroke-width="3.2" stroke-linecap="round" stroke-linejoin="round"><rect x="2782.6" y="24.7" width="26.8" height="20.2" rx="3.4"/><path d="M2783 39.6 H2809"/><path d="M2792.5 45.5 L2790 51 H2802 L2799.5 45.5"/></g>
</svg>
</body></html>
